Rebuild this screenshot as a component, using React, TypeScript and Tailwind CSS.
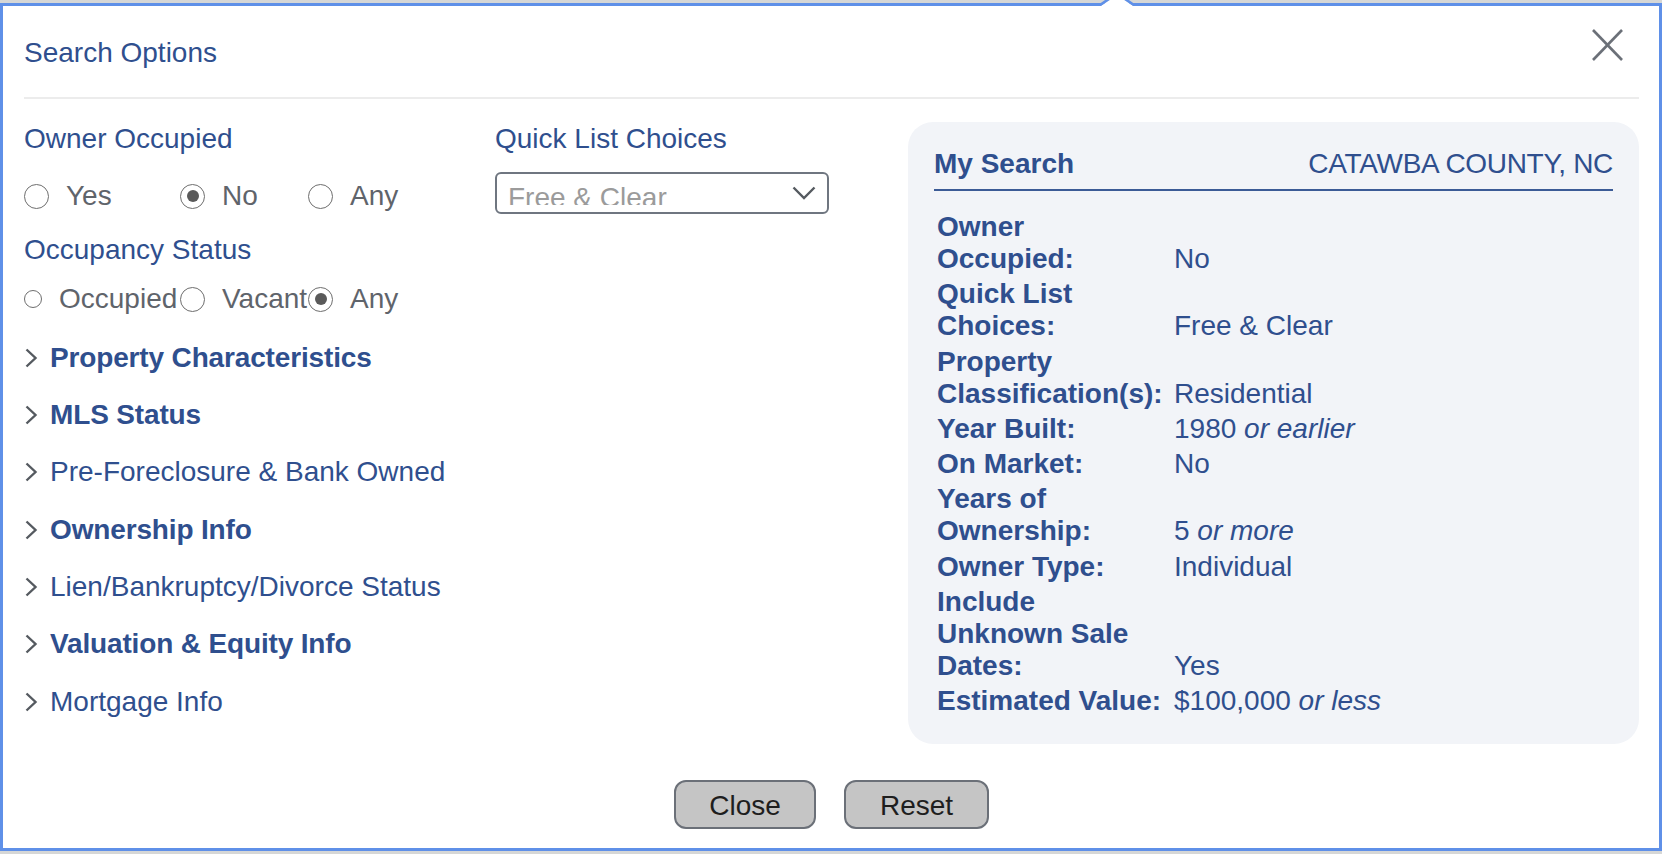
import React from "react";

function Radio({ checked, small }: { checked?: boolean; small?: boolean }) {
  return (
    <span
      className={`${small ? "w-[18px] h-[18px]" : "w-[25px] h-[25px]"} shrink-0 rounded-full border-[1.5px] border-[#6e6e6e] bg-white flex items-center justify-center`}
    >
      {checked && <span className="w-[12px] h-[12px] rounded-full bg-[#5a5a5a]" />}
    </span>
  );
}

function RadioItem({ label, checked, small, w }: { label: string; checked?: boolean; small?: boolean; w: string }) {
  return (
    <div className={`flex items-center gap-[17px] ${w}`}>
      <Radio checked={checked} small={small} />
      <span className="text-[#5f646b]">{label}</span>
    </div>
  );
}

function Chevron() {
  return (
    <svg width="14" height="20" viewBox="0 0 14 20" className="shrink-0">
      <polyline points="2.5,1.5 11.5,10 2.5,18.5" fill="none" stroke="#555a60" strokeWidth="2.4" />
    </svg>
  );
}

const sections = [
  { t: "Property Characteristics", b: true },
  { t: "MLS Status", b: true },
  { t: "Pre-Foreclosure & Bank Owned", b: false },
  { t: "Ownership Info", b: true },
  { t: "Lien/Bankruptcy/Divorce Status", b: false },
  { t: "Valuation & Equity Info", b: true },
  { t: "Mortgage Info", b: false },
];

const rows: { label: string; value: React.ReactNode }[] = [
  { label: "Owner Occupied:", value: "No" },
  { label: "Quick List Choices:", value: "Free & Clear" },
  { label: "Property Classification(s):", value: "Residential" },
  { label: "Year Built:", value: <>1980 <i>or earlier</i></> },
  { label: "On Market:", value: "No" },
  { label: "Years of Ownership:", value: <>5 <i>or more</i></> },
  { label: "Owner Type:", value: "Individual" },
  { label: "Include Unknown Sale Dates:", value: "Yes" },
  { label: "Estimated Value:", value: <>$100,000 <i>or less</i></> },
];

export default function App() {
  return (
    <div className="relative w-[1662px] h-[854px] overflow-hidden bg-[#d6d7d6] [font-family:'Liberation_Sans',Arial,sans-serif] text-[28px] leading-[32px]">
      <div className="mt-[3px] h-[848px] w-full border-[3px] border-[#5f90e8] bg-white pl-[21px] pr-[20px] flex flex-col">
        {/* header */}
        <div className="h-[91px] flex justify-between items-start">
          <div className="mt-[30.5px] text-[#2f4f8e]">Search Options</div>
          <svg width="31" height="32" viewBox="0 0 31 32" className="mt-[23px] mr-[16px]">
            <line x1="1" y1="1" x2="30" y2="31" stroke="#6b7078" strokeWidth="2.6" />
            <line x1="30" y1="1" x2="1" y2="31" stroke="#6b7078" strokeWidth="2.6" />
          </svg>
        </div>
        <div className="h-[2px] bg-[#ececec]" />

        {/* body */}
        <div className="pt-[23px] flex">
          <div className="w-[471px] flex flex-col">
            <div className="mt-[0.5px] text-[#2f4f8e]">Owner Occupied</div>
            <div className="mt-[25.5px] h-[32px] flex items-center">
              <RadioItem label="Yes" w="w-[156px]" />
              <RadioItem label="No" checked w="w-[128px]" />
              <RadioItem label="Any" w="w-auto" />
            </div>
            <div className="mt-[22px] text-[#2f4f8e]">Occupancy Status</div>
            <div className="mt-[17px] h-[32px] flex items-center">
              <RadioItem label="Occupied" small w="w-[156px]" />
              <RadioItem label="Vacant" w="w-[128px]" />
              <RadioItem label="Any" checked w="w-auto" />
            </div>
            <div className="mt-[26.5px] flex flex-col gap-[25.4px]">
              {sections.map((s) => (
                <div key={s.t} className="flex items-center gap-[12px] text-[#2f4f8e]">
                  <Chevron />
                  <span className={s.b ? "font-bold tracking-[-0.15px]" : "font-normal"}>{s.t}</span>
                </div>
              ))}
            </div>
          </div>

          <div className="w-[334px] flex flex-col">
            <div className="mt-[0.5px] text-[#2f4f8e]">Quick List Choices</div>
            <div className="mt-[17.5px] relative h-[42px] w-[334px] border-2 border-[#6f7680] rounded-[6px] bg-white">
              <div className="absolute left-[11px] top-0 h-[31px] overflow-hidden">
                <div className="pt-[8px] text-[#9b9b9b] whitespace-nowrap">Free &amp; Clear</div>
              </div>
              <svg width="24" height="14" viewBox="0 0 24 14" className="absolute right-[11px] top-[12px]">
                <polyline points="1.5,1.5 12,12 22.5,1.5" fill="none" stroke="#555a60" strokeWidth="2.4" />
              </svg>
            </div>
          </div>

          <div className="flex-1" />

          <div className="w-[731px] rounded-[25px] bg-[#f2f4f8] pt-[26px] pl-[26px] pr-[26px] pb-[27px] text-[#2f4f8e]">
            <div className="flex justify-between pb-[9px] border-b-2 border-[#3b5b96]">
              <span className="font-bold">My Search</span>
              <span className="tracking-[-0.3px]">CATAWBA COUNTY, NC</span>
            </div>
            <div className="mt-[20px] pl-[3px] flex flex-col gap-[3.3px]">
              {rows.map((r) => (
                <div key={r.label} className="flex items-end gap-[9px]">
                  <div className="w-[228px] font-bold">{r.label}</div>
                  <div>{r.value}</div>
                </div>
              ))}
            </div>
          </div>
        </div>

        {/* footer */}
        <div className="mt-[36px] flex justify-center gap-[28px]">
          <button className="w-[142px] h-[49px] pt-[3px] border-2 border-[#6b7078] rounded-[12px] bg-[#c5c5c5] text-[#1e1e1e] text-[28px] leading-[32px]">
            Close
          </button>
          <button className="w-[145px] h-[49px] pt-[3px] border-2 border-[#6b7078] rounded-[12px] bg-[#c5c5c5] text-[#1e1e1e] text-[28px] leading-[32px]">
            Reset
          </button>
        </div>
      </div>

      {/* notch */}
      <svg width="40" height="10" viewBox="0 0 40 10" className="absolute left-[1097px] top-0">
        <polygon points="3,6.5 20,-5 37,6.5" fill="#ffffff" />
        <polyline points="3,5 20,-6.5 37,5" fill="none" stroke="#5f90e8" strokeWidth="2.6" />
      </svg>
    </div>
  );
}
